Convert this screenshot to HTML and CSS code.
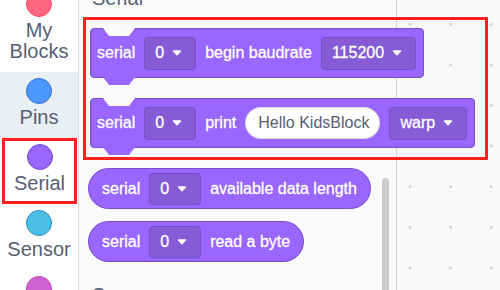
FILE: index.html
```html
<!DOCTYPE html>
<html>
<head>
  <meta charset="utf-8">
  <title>KidsBlock - Serial</title>
  <link rel="stylesheet" href="styles.css">
</head>
<body>
  <div class="app">
    <nav class="cats">
      <div class="cat"><span class="dot dot-my"></span><span class="cat-name">My<br>Blocks</span></div>
      <div class="cat cat-on"><span class="dot dot-pins"></span><span class="cat-name">Pins</span></div>
      <div class="cat cat-mark"><span class="dot dot-serial"></span><span class="cat-name">Serial</span></div>
      <div class="cat"><span class="dot dot-sensor"></span><span class="cat-name">Sensor</span></div>
      <div class="cat"><span class="dot dot-display"></span><span class="cat-name">Display</span></div>
    </nav>

    <main class="workspace">
      <section class="flyout">
        <div class="flyout-title">Serial</div>

        <div class="mark-box">
          <div class="block stack">
            <span>serial</span>
            <span class="menu">0<svg class="caret" width="10" height="6" viewBox="0 0 10 6"><path d="M1.5 1 L5 4.8 L8.5 1 Z"/></svg></span>
            <span>begin baudrate</span>
            <span class="menu">115200<svg class="caret" width="10" height="6" viewBox="0 0 10 6"><path d="M1.5 1 L5 4.8 L8.5 1 Z"/></svg></span>
          </div>
          <div class="block stack">
            <span>serial</span>
            <span class="menu">0<svg class="caret" width="10" height="6" viewBox="0 0 10 6"><path d="M1.5 1 L5 4.8 L8.5 1 Z"/></svg></span>
            <span>print</span>
            <span class="field">Hello KidsBlock</span>
            <span class="menu">warp<svg class="caret" width="10" height="6" viewBox="0 0 10 6"><path d="M1.5 1 L5 4.8 L8.5 1 Z"/></svg></span>
          </div>
        </div>

        <div class="block reporter">
          <span>serial</span>
          <span class="menu">0<svg class="caret" width="10" height="6" viewBox="0 0 10 6"><path d="M1.5 1 L5 4.8 L8.5 1 Z"/></svg></span>
          <span>available data length</span>
        </div>
        <div class="block reporter">
          <span>serial</span>
          <span class="menu">0<svg class="caret" width="10" height="6" viewBox="0 0 10 6"><path d="M1.5 1 L5 4.8 L8.5 1 Z"/></svg></span>
          <span>read a byte</span>
        </div>

        <div class="flyout-title next-title">Sensor</div>

        <div class="scroll"></div>
      </section>
    </main>
  </div>
</body>
</html>
```

FILE: styles.css
```css
* {
  box-sizing: border-box;
}
body {
  margin: 0;
  font-family: "Liberation Sans", Arial, sans-serif;
  color: #575e75;
  overflow: hidden;
}
.app {
  display: flex;
  height: 290px;
  overflow: hidden;
}

/* category menu */
.cats {
  width: 79px;
  flex: none;
  background: #fff;
  border-right: 1px solid #dadde3;
}
.cat {
  display: flex;
  flex-direction: column;
  align-items: center;
  gap: 3px;
  padding: 6px 0 10px;
  font-size: 20px;
  line-height: 21px;
  text-align: center;
}
.cat:first-child {
  margin-top: -15px;
}
.cat-on {
  background: #e9eef2;
}
.cat-mark {
  margin: 0 1px 0 2px;
  outline: 3px solid #ff2020;
  outline-offset: -3px;
}
.dot {
  width: 26px;
  height: 26px;
  border-radius: 50%;
  border: 1px solid;
}
.dot-my { background: #ff6680; border-color: #ff4d6a; }
.dot-pins { background: #4c97ff; border-color: #3373cc; }
.dot-serial { background: #9966ff; border-color: #774dcb; }
.dot-sensor { background: #4cbfe6; border-color: #2e8eb8; }
.dot-display { background: #cf63cf; border-color: #bd42bd; }

/* workspace + flyout */
.workspace {
  flex: 1;
  display: flex;
  background-color: #f9f9f9;
  background-image: radial-gradient(circle, #c9c9c9 0.9px, transparent 1.6px);
  background-size: 40.6px 40.6px;
  background-position: -14px 4px;
}
.flyout {
  position: relative;
  z-index: 1;
  width: 318px;
  height: 100%;
  padding-left: 4px;
  background: rgba(249, 249, 249, 0.88);
  border-right: 1px solid #d2d2d2;
}
.flyout-title {
  font-size: 20px;
  line-height: 24px;
  margin: -14px 0 7px 9px;
}
.next-title {
  margin-top: 21px;
}
.mark-box {
  width: 405px;
  border: 3px solid #ff2020;
  padding: 8px 4px 9px;
}

/* blocks */
.block {
  display: flex;
  align-items: center;
  gap: 9px;
  width: max-content;
  background: #9966ff;
  border: 1px solid #774dcb;
  color: #fff;
  font-size: 16px;
  white-space: nowrap;
  -webkit-text-stroke: 0.3px #fff;
}
.stack {
  position: relative;
  height: 50px;
  border-radius: 4px;
  padding: 0 7px 0 6px;
}
.stack + .stack {
  margin-top: 20px;
}
.stack::before,
.stack::after {
  content: "";
  position: absolute;
  left: 12px;
  width: 32px;
  height: 8px;
  clip-path: polygon(0 0, 100% 0, calc(100% - 6px) 100%, 6px 100%);
}
.stack::before {
  top: -1px;
  background: #f9f9f9;
}
.stack::after {
  bottom: -8px;
  background: #9966ff;
}
.reporter {
  height: 41px;
  border-radius: 21px;
  padding: 0 13px;
  margin-left: 5px;
}
.mark-box + .reporter {
  margin-top: 8px;
}
.reporter + .reporter {
  margin-top: 12px;
}
.menu {
  display: flex;
  align-items: center;
  gap: 8px;
  height: 33px;
  padding: 0 13px 0 10px;
  background: #855cd6;
  border: 1px solid #774dcb;
  border-radius: 4px;
}
.reporter .menu {
  height: 32px;
}
.caret {
  fill: #fff;
  stroke: #fff;
  stroke-width: 1.4;
  stroke-linejoin: round;
}
.field {
  display: flex;
  align-items: center;
  height: 32px;
  padding: 0 10px 0 12px;
  border-radius: 16px;
  background: #fff;
  border: 1px solid rgba(0, 0, 0, 0.12);
  color: #575e75;
  -webkit-text-stroke: 0;
}
.scroll {
  position: absolute;
  left: 303px;
  top: 178px;
  bottom: -10px;
  width: 7px;
  border-radius: 4px;
  background: #cbcbcb;
}
```
